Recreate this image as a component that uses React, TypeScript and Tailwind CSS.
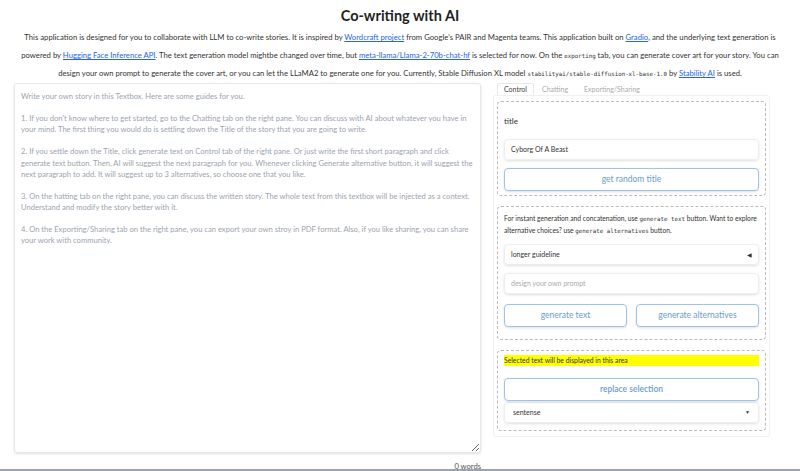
import React from "react";

const placeholder = `Write your own story in this Textbox. Here are some guides for you.

1. If you don't know where to get started, go to the Chatting tab on the right pane. You can discuss with AI about whatever you have in your mind. The first thing you would do is settling down the Title of the story that you are going to write.

2. If you settle down the Title, click generate text on Control tab of the right pane. Or just write the first short paragraph and click generate text button. Then, AI will suggest the next paragraph for you. Whenever clicking Generate alternative button, it will suggest the next paragraph to add. It will suggest up to 3 alternatives, so choose one that you like.

3. On the hatting tab on the right pane, you can discuss the written story. The whole text from this textbox will be injected as a context. Understand and modify the story better with it.

4. On the Exporting/Sharing tab on the right pane, you can export your own stroy in PDF format. Also, if you like sharing, you can share your work with community.`;

function Link({ children }: { children: React.ReactNode }) {
  return <a className="text-[#2563eb] underline">{children}</a>;
}

function Code({ children }: { children: React.ReactNode }) {
  return <code className="font-['DejaVu_Sans_Mono',monospace] text-[5.8px] leading-[0]">{children}</code>;
}

export default function App() {
  return (
    <div className="w-[800px] h-[471px] overflow-hidden bg-white font-['Lato',sans-serif] text-[#374151] relative">
      <h1 className="text-center text-[14.5px] font-bold text-[#1f1f1f] pt-[6px] leading-[20px]">Co-writing with AI</h1>
      <p className="mt-[2px] h-[54px] px-[20px] text-center text-[7.7px] leading-[18px] text-[#333]">
        This application is designed for you to collaborate with LLM to co-write stories. It is inspired by <Link>Wordcraft project</Link> from Google's PAIR and Magenta teams. This application built on <Link>Gradio</Link>, and the underlying text generation is powered by <Link>Hugging Face Inference API</Link>. The text generation model mightbe changed over time, but <Link>meta-llama/Llama-2-70b-chat-hf</Link> is selected for now. On the <Code>exporting</Code> tab, you can generate cover art for your story. You can design your own prompt to generate the cover art, or you can let the LLaMA2 to generate one for you. Currently, Stable Diffusion XL model <Code>stabilityai/stable-diffusion-xl-base-1.0</Code> by <Link>Stability AI</Link> is used.
      </p>
      <div className="flex px-[14px] mt-[1px]">
        <div className="w-[467px] flex flex-col">
          <textarea
            className="block w-[467px] h-[370px] border border-[#e5e7eb] rounded-[3px] shadow-sm px-[6px] py-[7px] text-[7.6px] leading-[11.1px] font-['Lato',sans-serif] placeholder:text-[#9ca3af] outline-none"
            placeholder={placeholder}
          />
          <div className="text-right text-[7.6px] text-[#555] mt-[8px] leading-[10px]">0 words</div>
        </div>
        <div className="ml-[12px] w-[277px]">
          <div className="flex text-[7px] h-[12px] items-end">
            <div className="px-[6px] h-[12px] border border-b-0 border-[#e5e7eb] rounded-t-[3px] flex items-center text-[#444] ml-[4px] bg-white">Control</div>
            <div className="px-[8px] text-[#aaa] h-[12px] flex items-center">Chatting</div>
            <div className="px-[8px] text-[#aaa] h-[12px] flex items-center">Exporting/Sharing</div>
          </div>
          <div className="border border-[#f0f0f0] rounded-[3px] px-[3px] py-[5px] flex flex-col gap-[10px] bg-white">
            <div className="border border-dashed border-[#bbb] rounded-[4px] px-[6px] pt-[14px] pb-[4px]">
              <div className="text-[8px] text-[#333] leading-[10px]">title</div>
              <div className="mt-[13px] h-[21px] border border-[#eee] rounded-[4px] shadow-sm flex items-center px-[6px] text-[7px] text-[#333]">Cyborg Of A Beast</div>
              <button className="mt-[8px] w-full h-[23px] border border-[#9ec3e6] rounded-[4px] text-[#6b9bd2] text-[8.5px] shadow-sm">get random title</button>
            </div>
            <div className="border border-dashed border-[#bbb] rounded-[4px] px-[6px] pt-[5px] pb-[12px]">
              <div className="text-[6.7px] leading-[12px] text-[#333]">
                For instant generation and concatenation, use <Code>generate text</Code> button. Want to explore alternative choices? use <Code>generate alternatives</Code> button.
              </div>
              <div className="mt-[8px] h-[21px] border border-[#eee] rounded-[4px] shadow-sm flex items-center justify-between px-[6px] text-[7px] text-[#333]">
                <span>longer guideline</span>
                <span className="text-[6px]">◀</span>
              </div>
              <div className="mt-[8px] h-[21px] border border-[#eee] rounded-[4px] shadow-sm flex items-center px-[6px] text-[7px] text-[#aaa]">design your own prompt</div>
              <div className="mt-[10px] flex gap-[9px]">
                <button className="flex-1 h-[23px] border border-[#9ec3e6] rounded-[4px] text-[#6b9bd2] text-[8.5px] shadow-sm">generate text</button>
                <button className="flex-1 h-[23px] border border-[#9ec3e6] rounded-[4px] text-[#6b9bd2] text-[8.5px] shadow-sm">generate alternatives</button>
              </div>
            </div>
            <div className="border border-dashed border-[#bbb] rounded-[4px] px-[6px] pt-[4px] pb-[7px]">
              <div className="bg-[#ffff00] h-[11px] text-[6.8px] leading-[11px] text-[#333]">Selected text will be displayed in this area</div>
              <button className="mt-[12px] w-full h-[23px] border border-[#9ec3e6] rounded-[4px] text-[#6b9bd2] text-[8.5px] font-semibold shadow-sm">replace selection</button>
              <div className="mt-[1px] h-[21px] border border-[#eee] rounded-[4px] shadow-sm flex items-center justify-between px-[8px] text-[7px] text-[#333]">
                <span>sentense</span>
                <span className="text-[5px]">▼</span>
              </div>
            </div>
          </div>
        </div>
      </div>
      <div className="absolute left-0 right-0 bottom-0 h-[2px] bg-[#9ca3af]" />
    </div>
  );
}
